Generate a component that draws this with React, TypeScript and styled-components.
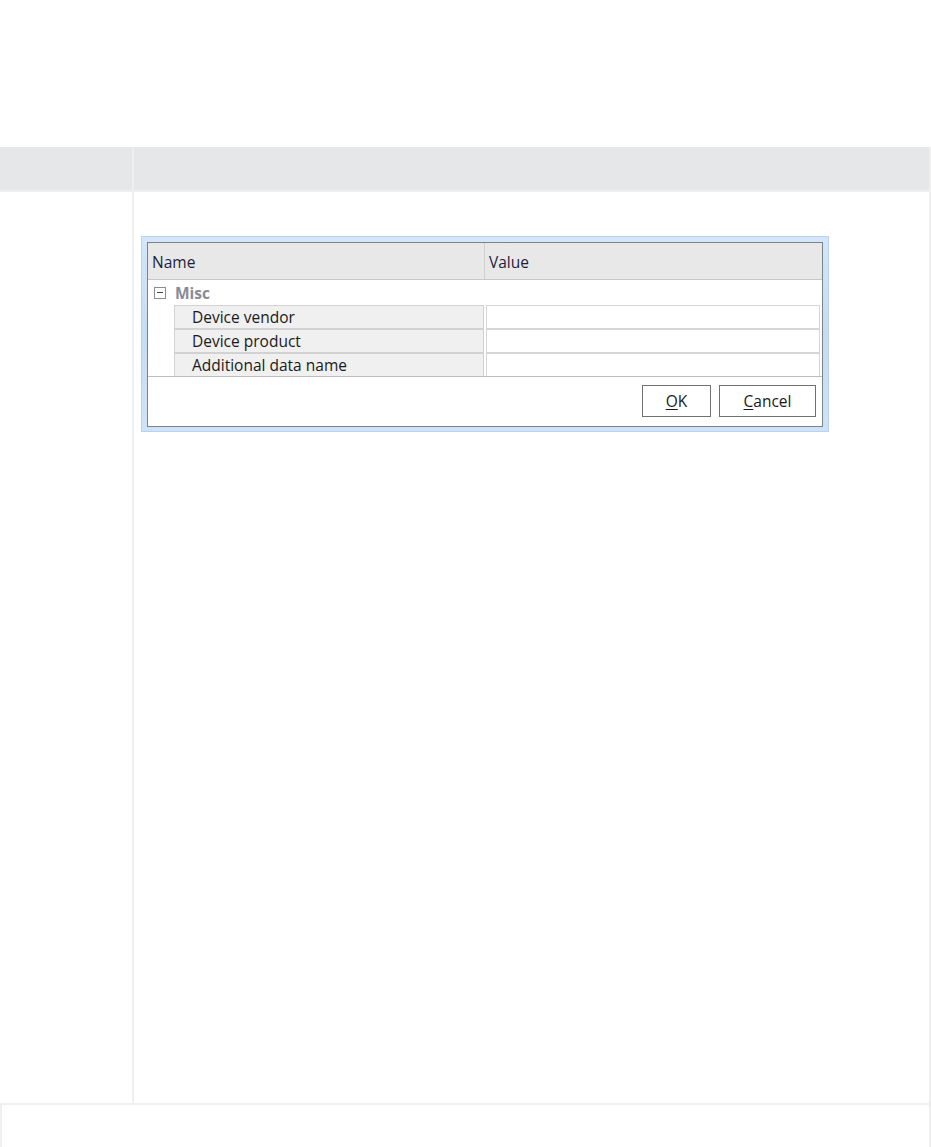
import React from "react";
import styled, { createGlobalStyle } from "styled-components";

const Global = createGlobalStyle`
  html, body { margin: 0; padding: 0; background: #ffffff; }
  body { font-family: "Open Sans", "Noto Sans", sans-serif; }
`;

const Page = styled.div`
  width: 931px;
  min-height: 1147px;
  padding-top: 147px;
  box-sizing: border-box;
  background: #fff;
`;

const Table = styled.div`
  display: flex;
  flex-direction: column;
  width: 931px;
  border-right: 2px solid #efefef;
  box-sizing: border-box;
`;

const Row = styled.div<{ $height: number }>`
  display: grid;
  grid-template-columns: 132px 1fr;
  column-gap: 2px;
  background: #efefef;
  height: ${(p) => p.$height}px;
  border-bottom: 2px solid #efefef;
`;

const Cell = styled.div<{ $head?: boolean }>`
  background: ${(p) => (p.$head ? "#e5e7e8" : "#ffffff")};
`;

const FullRow = styled.div`
  height: 43px;
  border-left: 2px solid #efefef;
  background: #fff;
`;

const BodyCell = styled(Cell)`
  padding: 44px 0 0 7px;
`;

const Frame = styled.div`
  width: 688px;
  height: 196px;
  box-sizing: border-box;
  padding: 5px 5px 4px 5px;
  background: linear-gradient(180deg, #d3e6fa 0%, #c6dcf4 50%, #cfe3f8 100%);
  border: 1px solid #b9d3ef;
`;

const Window = styled.div`
  height: 100%;
  box-sizing: border-box;
  border: 1px solid #7d8287;
  background: #fff;
  display: flex;
  flex-direction: column;
  font-family: "Open Sans", "Noto Sans", sans-serif;
  font-size: 15.5px;
  color: #1a1a1a;
`;

const GridHead = styled.div`
  display: grid;
  grid-template-columns: 336px 1fr;
  height: 36px;
  background: #e8e8e8;
  border-bottom: 1px solid #c8c8c8;
`;

const HeadCell = styled.div<{ $sep?: boolean }>`
  display: flex;
  align-items: center;
  padding-left: 4px;
  padding-top: 1px;
  border-left: ${(p) => (p.$sep ? "1px solid #cfcfcf" : "none")};
  color: #1e1e3c;
`;

const Category = styled.div`
  display: flex;
  align-items: center;
  height: 25px;
  padding-left: 6px;
  gap: 9px;
  font-weight: 700;
  color: #8a8a96;
`;

const ToggleBox = styled.span`
  width: 10px;
  height: 10px;
  border: 1px solid #8c8c8c;
  position: relative;
  display: inline-block;
  &::after {
    content: "";
    position: absolute;
    left: 2px;
    right: 2px;
    top: 4px;
    height: 1px;
    background: #444;
  }
`;

const PropList = styled.div`
  display: flex;
  flex-direction: column;
  gap: 1px;
  padding: 0 2px 0 26px;
`;

const PropRow = styled.div`
  display: grid;
  grid-template-columns: 310px 1fr;
  column-gap: 2px;
  height: 23px;
`;

const PropName = styled.div`
  background: #f0f0f0;
  border: 1px solid #d2d2d2;
  display: flex;
  align-items: center;
  padding-left: 17px;
  color: #1a1a1a;
`;

const PropValue = styled.div`
  background: #fff;
  border: 1px solid #d6d6d6;
`;

const Footer = styled.div`
  margin-top: auto;
  height: 48px;
  border-top: 1px solid #bdbdbd;
  display: flex;
  justify-content: flex-end;
  align-items: center;
  gap: 8px;
  padding-right: 6px;
  padding-bottom: 1px;
`;

const Button = styled.button<{ $w: number }>`
  width: ${(p) => p.$w}px;
  height: 32px;
  border: 1px solid #707070;
  background: #fff;
  font-family: "Open Sans", "Noto Sans", sans-serif;
  font-size: 15.5px;
  color: #1a1a1a;
  padding: 0;
  u { text-decoration: underline; text-underline-offset: 2px; }
`;

export default function App() {
  const props = ["Device vendor", "Device product", "Additional data name"];
  return (
    <Page>
      <Global />
      <Table>
        <Row $height={43}>
          <Cell $head />
          <Cell $head />
        </Row>
        <Row $height={911}>
          <Cell />
          <BodyCell>
            <Frame>
              <Window>
                <GridHead>
                  <HeadCell>Name</HeadCell>
                  <HeadCell $sep>Value</HeadCell>
                </GridHead>
                <Category>
                  <ToggleBox />
                  Misc
                </Category>
                <PropList>
                  {props.map((p) => (
                    <PropRow key={p}>
                      <PropName>{p}</PropName>
                      <PropValue />
                    </PropRow>
                  ))}
                </PropList>
                <Footer>
                  <Button $w={69}>
                    <u>O</u>K
                  </Button>
                  <Button $w={97}>
                    <u>C</u>ancel
                  </Button>
                </Footer>
              </Window>
            </Frame>
          </BodyCell>
        </Row>
        <FullRow />
      </Table>
    </Page>
  );
}
